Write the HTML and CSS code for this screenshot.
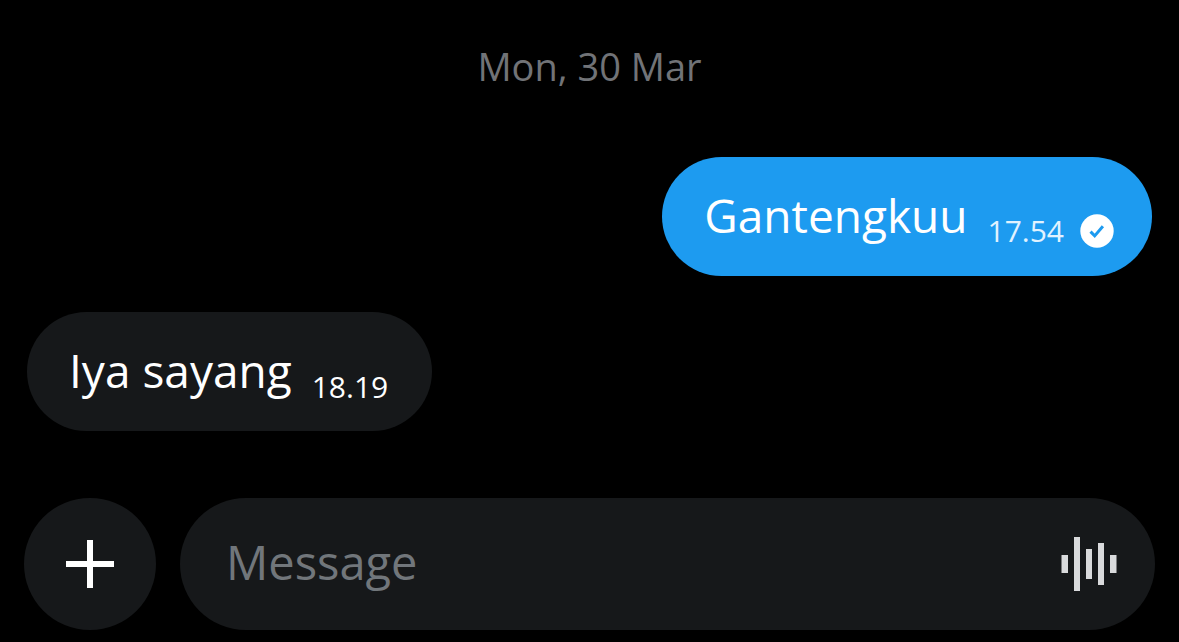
FILE: index.html
```
<!DOCTYPE html>
<html lang="en">
<head>
<meta charset="utf-8">
<meta name="viewport" content="width=device-width, initial-scale=1">
<title>Messages</title>
<link rel="stylesheet" href="styles.css">
</head>
<body>
<main class="thread">
  <h2 class="day">Mon, 30 Mar</h2>
  <div class="bubble bubble-sent">
    <p class="text">Gantengkuu</p>
    <div class="meta">
      <time class="time">17.54</time>
      <svg class="receipt" viewBox="0 0 34 34" role="img" aria-label="Sent">
        <circle cx="17" cy="17" r="16.7" fill="#fff"/>
        <path d="M10.5 17.6l4.2 4.3 8.2-9.6" fill="none" stroke="#1d9bf0" stroke-width="3"/>
      </svg>
    </div>
  </div>
  <div class="bubble bubble-received">
    <p class="text">Iya sayang</p>
    <div class="meta"><time class="time">18.19</time></div>
  </div>
</main>
<form class="composer">
  <button class="add" type="button" aria-label="Add attachment">
    <svg class="add-icon" viewBox="0 0 50 50" aria-hidden="true">
      <path d="M22 1h6v21h21v6H28v21h-6V28H1v-6h21z" fill="#fff"/>
    </svg>
  </button>
  <div class="field">
    <input class="input" type="text" placeholder="Message" aria-label="Message">
    <button class="voice" type="button" aria-label="Record voice message">
      <svg class="voice-icon" viewBox="0 0 56 56" aria-hidden="true">
        <path d="M.5 19h6.500v18H.5zM13 1h6v54h-6zM25 13h6v30h-6zM37 7h6v42h-6zM49 19h6.500v18H49z" fill="#d9dadc"/>
      </svg>
    </button>
  </div>
</form>
</body>
</html>
```
FILE: styles.css
```
* {
  box-sizing: border-box;
}

body {
  margin: 0;
  min-height: 100vh;
  display: flex;
  flex-direction: column;
  justify-content: space-between;
  background: #000;
  color: #fff;
  font-family: "Open Sans", "Noto Sans", sans-serif;
}

.thread {
  display: flex;
  flex-direction: column;
  gap: 36px;
  padding: 40px 27px 0;
}

.day {
  margin: 0 0 29px;
  color: #717377;
  font-size: 38px;
  font-weight: 400;
  line-height: 52px;
  text-align: center;
}

.bubble {
  display: flex;
  align-items: flex-end;
  gap: 20px;
  max-width: 80%;
  padding: 28px 38px 28px 42px;
  border-radius: 60px;
}

.bubble-sent {
  align-self: flex-end;
  background: #1d9bf0;
}

.bubble-received {
  align-self: flex-start;
  padding-right: 44px;
  background: #16181a;
}

.text {
  margin: 0;
  padding-bottom: 3px;
  font-size: 46px;
  line-height: 60px;
}

.meta {
  display: flex;
  align-items: center;
  gap: 16px;
}

.time {
  font-size: 30px;
  line-height: 32px;
}

.bubble-sent .time {
  color: #e0f2ff;
}

.receipt {
  width: 34px;
  height: 34px;
}

.composer {
  display: flex;
  gap: 24px;
  padding: 24px 24px 12px;
}

.add,
.voice {
  display: flex;
  align-items: center;
  justify-content: center;
  flex: none;
  padding: 0;
  border: 0;
  background: none;
}

.add {
  width: 132px;
  height: 132px;
  border-radius: 50%;
  background: #16181a;
}

.add-icon {
  width: 50px;
  height: 50px;
}

.field {
  display: flex;
  align-items: center;
  flex: 1;
  min-width: 0;
  padding: 0 38px 0 46px;
  border-radius: 66px;
  background: #16181a;
}

.input {
  flex: 1;
  min-width: 0;
  padding: 0 0 4px;
  border: 0;
  outline: 0;
  background: none;
  color: #fff;
  font: 47px/62px "Open Sans", "Noto Sans", sans-serif;
}

.input::placeholder {
  color: #71767b;
  opacity: 1;
}

.voice-icon {
  width: 56px;
  height: 56px;
}
```
